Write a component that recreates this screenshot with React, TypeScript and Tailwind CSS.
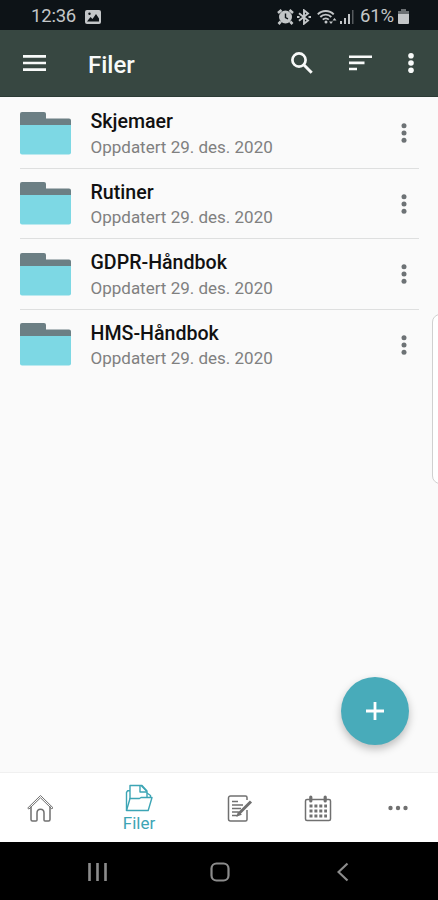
import type { ReactNode } from 'react';

interface Folder {
  name: string;
  updated: string;
}

const folders: Folder[] = [
  { name: 'Skjemaer', updated: 'Oppdatert 29. des. 2020' },
  { name: 'Rutiner', updated: 'Oppdatert 29. des. 2020' },
  { name: 'GDPR-Håndbok', updated: 'Oppdatert 29. des. 2020' },
  { name: 'HMS-Håndbok', updated: 'Oppdatert 29. des. 2020' },
];

function StatusBar() {
  return (
    <div className="flex h-[30px] shrink-0 items-center bg-[#0d1317] pt-[3px] pl-[31px] text-[#c3c6c8]">
      <span className="w-[54px] text-[18.5px] leading-none tracking-[-0.2px]">12:36</span>
      {/* Picture notification */}
      <svg width="16" height="14" viewBox="0 0 16 14">
        <rect width="16" height="14" rx="2" fill="currentColor" />
        <path d="M2 11.5L5.5 7l2 2L11 4l3 4.500v3z" fill="#0d1317" />
        <circle cx="4.500" cy="3.800" r="1.200" fill="#0d1317" />
      </svg>

      {/* Alarm */}
      <svg className="ml-[176px]" width="17" height="16" viewBox="0 0 17 16" fill="none" stroke="currentColor">
        <circle cx="8.500" cy="8" r="6.500" fill="currentColor" stroke="none" />
        <path d="M1 4l3.500-3M16 4l-3.500-3M3.800 12.500L1.500 15M13.200 12.500l2.300 2.500" strokeWidth="2.600" />
        <path d="M8.500 4.500V8.500l2.500 1.300" stroke="#0d1317" strokeWidth="1.400" />
      </svg>
      {/* Bluetooth */}
      <svg className="ml-[3px]" width="14" height="16" viewBox="0 0 14 16" fill="none" stroke="currentColor" strokeWidth="1.900">
        <path d="M2 4.300l9 7.200-4 3.200V1.300l4 3.200-9 7.200" />
        <path d="M0 8h2.500M11.500 8H14" strokeWidth="2.200" />
      </svg>
      {/* Wifi */}
      <svg className="ml-[6px]" width="20" height="16" viewBox="0 0 20 16" fill="none" stroke="currentColor">
        <path d="M.8 5.300C5 .8 12.500.8 16.700 5.300" strokeWidth="1.900" />
        <path d="M3.300 8c3-3.200 8-3.200 11 0M5.800 10.700c1.700-1.800 4.300-1.800 6 0" strokeWidth="1.900" />
        <circle cx="9" cy="13" r="1.500" fill="currentColor" stroke="none" />
        <path d="M12 12.500l2 2.500 2-2.500zM15.500 11.500l2-2.500 2 2.500z" fill="currentColor" stroke="none" />
      </svg>
      {/* Signal strength */}
      <svg className="ml-[3px]" width="14" height="16" viewBox="0 0 14 16" fill="currentColor">
        <path d="M0 12h2v3H0zM4 9h2v6H4zM8 5h2v10H8z" />
        <path d="M12 1h1.500v14H12z" opacity=".4" />
      </svg>
      <span className="ml-[6px] w-[37px] text-[18.500px] leading-none tracking-[-0.200px]">61%</span>
      {/* Battery */}
      <svg className="ml-[1px]" width="11" height="15" viewBox="0 0 11 15">
        <path d="M3 0h5v2h3v4H0V2h3z" fill="#6b7073" />
        <path d="M0 5h11v9a1 1 0 01-1 1H1a1 1 0 01-1-1z" fill="currentColor" />
      </svg>
    </div>
  );
}

function AppBar() {
  return (
    <header className="flex h-[67px] shrink-0 items-center border-b border-[#2c3b35] bg-[#374741] pl-[23px] text-[#f8faf9]">
      <button aria-label="Menu">
        <svg width="23" height="18" viewBox="0 0 23 18" fill="currentColor">
          <path d="M0 1h23v2.700H0zM0 7.700h23v2.600H0zM0 14.300h23V17H0z" />
        </svg>
      </button>
      <h1 className="ml-[42px] w-[203px] pt-[3px] text-[24px] leading-none font-medium">Filer</h1>
      <button aria-label="Search">
        <svg width="22" height="22" viewBox="0 0 22 22" fill="none" stroke="currentColor" strokeWidth="2.700">
          <circle cx="8" cy="8" r="6.600" />
          <path d="M13 13l7.700 7.700" strokeWidth="3" />
        </svg>
      </button>
      <button aria-label="Sort" className="ml-[36px]">
        <svg width="23" height="18" viewBox="0 0 23 18" fill="currentColor">
          <path d="M0 1.500h23v2.600H0zM0 7.600h15.500v2.600H0zM0 13.700h8v2.600H0z" />
        </svg>
      </button>
      <button aria-label="More" className="ml-[36px]">
        <svg width="6" height="22" viewBox="0 0 6 22" fill="currentColor">
          <circle cx="3" cy="3.800" r="2.800" />
          <circle cx="3" cy="11" r="2.800" />
          <circle cx="3" cy="18.300" r="2.800" />
        </svg>
      </button>
    </header>
  );
}

function FolderRow({ folder }: { folder: Folder }) {
  return (
    <li className="flex h-[70.500px] items-start border-b border-[#dedfdf] pt-[13px] last:border-b-0">
      <svg className="mt-[0.500px]" width="51" height="43" viewBox="0 0 51 43">
        <path d="M0 2a2 2 0 012-2h22a2 2 0 012 2v4.500h23a2 2 0 012 2V20H0z" fill="#6c7f84" />
        <path d="M0 13h51v27.500a2 2 0 01-2 2H2a2 2 0 01-2-2z" fill="#7dd8e4" />
      </svg>
      <div className="ml-[19.500px] flex-1">
        <h2 className="text-[19.600px] leading-[22px] font-medium text-[#111]">{folder.name}</h2>
        <p className="mt-[2.500px] text-[17px] leading-[22px] text-[#808080]">{folder.updated}</p>
      </div>
      <button aria-label="More" className="mt-3 mr-[12px]">
        <svg width="6" height="20" viewBox="0 0 6 20" fill="#6d7275">
          <circle cx="3" cy="2.700" r="2.500" />
          <circle cx="3" cy="10" r="2.500" />
          <circle cx="3" cy="17.300" r="2.500" />
        </svg>
      </button>
    </li>
  );
}

function NavItem({ label, children }: { label: string; children: ReactNode }) {
  return (
    <button aria-label={label} className="flex flex-col items-center text-[#707070]">
      {children}
    </button>
  );
}

function BottomNav() {
  return (
    <nav className="flex h-[70px] shrink-0 items-center border-t border-[#f0f0f0] bg-white pt-[1px] pl-[27px]">
      <NavItem label="Home">
        <svg width="27" height="28" viewBox="0 0 27 28" fill="none" stroke="currentColor" strokeWidth="1.500" strokeLinejoin="round" strokeLinecap="round">
          <path d="M4 13v12.500a1.500 1.500 0 001.500 1.500H9a1 1 0 001-1v-7c0-5 7-5 7 0v7a1 1 0 001 1h3.500a1.500 1.500 0 001.500-1.500V13" />
          <path d="M1 13.800L13.500 1.500 26 13.800l-1.200 1L13.500 3.800 2.200 14.800z" strokeWidth="1" />
        </svg>
      </NavItem>

      <button className="ml-[68px] flex w-[34px] flex-col items-center pt-[2px] text-[#3da5b5]">
        <svg width="28" height="28" viewBox="0 0 28 28" fill="none" stroke="currentColor" strokeWidth="1.400" strokeLinejoin="round">
          <path d="M1.500 26.500L5 14.500h9.500l1.500-1h11l-3.800 13z" />
          <path d="M1.500 26.500V8.500l1.200-1.800H5M5 15V1.500h12L22 7v6.500" />
          <path d="M15 1.500V8h7M16.500 2l5 5M22 9l3.500 2.500v2" />
        </svg>
        <span className="mt-[1px] text-[17px] leading-[21px]">Filer</span>
      </button>

      <div className="ml-[71px]">
        <NavItem label="Notes">
          <svg width="26" height="28" viewBox="0 0 26 28" fill="none" stroke="currentColor" strokeWidth="1.500">
            <path d="M20 6V3.500A1.500 1.500 0 0018.500 2h-15a2 2 0 00-2 2v21a2 2 0 002 2h15a1.500 1.500 0 001.500-1.500V16" />
            <path d="M5 7.500h6M5 11h11M5 14.500h9M5 18h6M5 21.500h6" />
            <path d="M12 19.500L24 7.500" strokeWidth="3" />
            <path d="M10.500 21.500l1-3 2 2z" fill="currentColor" />
          </svg>
        </NavItem>
      </div>

      <div className="ml-[51px]">
        <NavItem label="Calendar">
          <svg width="28" height="28" viewBox="0 0 28 28" fill="none" stroke="currentColor" strokeWidth="1.500">
            <rect x="1.500" y="5.500" width="25" height="21" rx="1.500" />
            <path d="M6.800 3v4M21.200 3v4" strokeWidth="3.200" strokeLinecap="round" />
            <path d="M5.500 12h17.500M5.500 17h17.500M5.500 22h17.500" strokeWidth="3" strokeDasharray="3 1.900" />
          </svg>
        </NavItem>
      </div>

      <div className="ml-[56px]">
        <NavItem label="More">
          <svg width="20" height="6" viewBox="0 0 20 6" fill="currentColor">
            <circle cx="2.500" cy="3" r="2.200" />
            <circle cx="10" cy="3" r="2.200" />
            <circle cx="17.500" cy="3" r="2.200" />
          </svg>
        </NavItem>
      </div>
    </nav>
  );
}

function SystemNav() {
  return (
    <div className="flex h-[58px] shrink-0 items-center bg-black pt-[2px] pl-[88px] text-[#8c8c8c]">
      <svg width="19" height="20" viewBox="0 0 19 20" fill="none" stroke="currentColor" strokeWidth="2.600">
        <path d="M1.500 1v18M9.500 1v18M17.500 1v18" />
      </svg>
      <svg className="ml-[103px]" width="20" height="20" viewBox="0 0 20 20" fill="none" stroke="currentColor" strokeWidth="2.200">
        <rect x="1.500" y="1.500" width="17" height="17" rx="5" />
      </svg>
      <svg className="ml-[107px]" width="12" height="20" viewBox="0 0 12 20" fill="none" stroke="currentColor" strokeWidth="2.200">
        <path d="M10.500 1.500L1.500 10l9 8.500" />
      </svg>
    </div>
  );
}

export default function App() {
  return (
    <div className="flex h-[900px] w-[438px] flex-col overflow-hidden bg-[#fafafa] font-[Roboto,sans-serif]">
      <StatusBar />
      <AppBar />

      <main className="relative flex-1 overflow-hidden">
        <ul className="mr-[19px] ml-5 pt-[1px]">
          {folders.map((folder) => (
            <FolderRow key={folder.name} folder={folder} />
          ))}
        </ul>

        {/* Edge panel handle */}
        <div className="absolute top-[217px] -right-[10px] h-[170px] w-[16px] rounded-[8px] border border-[#d0d0d0] bg-white" />

        <button
          aria-label="Add"
          className="absolute right-[29px] bottom-[27px] flex size-[68px] items-center justify-center rounded-full bg-[#48abba] shadow-[0_4px_8px_rgba(0,0,0,0.25)]"
        >
          <svg width="18" height="18" viewBox="0 0 18 18" stroke="white" strokeWidth="2.800">
            <path d="M9 0v18M0 9h18" />
          </svg>
        </button>
      </main>

      <BottomNav />
      <SystemNav />
    </div>
  );
}
